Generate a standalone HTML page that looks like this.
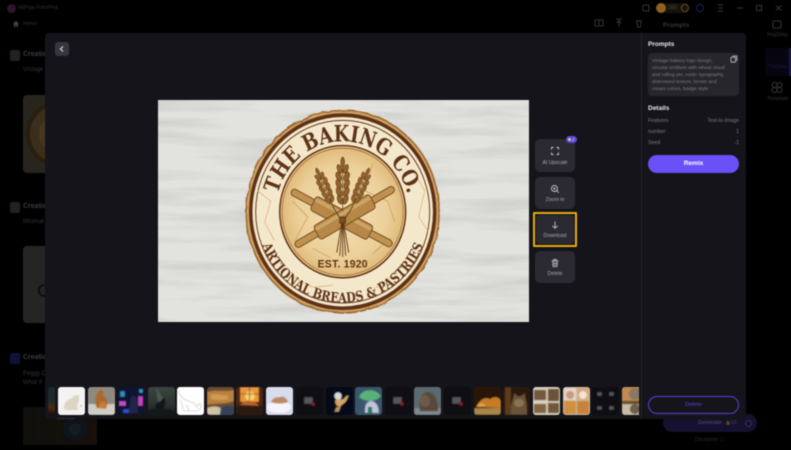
<!DOCTYPE html>
<html><head><meta charset="utf-8"><style>
html,body{margin:0;padding:0;background:#000;width:791px;height:450px;overflow:hidden;font-family:"Liberation Sans","Noto Sans CJK SC",sans-serif}
.a{position:absolute;white-space:nowrap}
.dim{color:#333338}
.btn{position:absolute;left:535px;width:40px;background:#2b2a33;border-radius:5px;color:#a9a8b0;font-size:5.2px;text-align:center}
.btn span{position:absolute;left:0;right:0;bottom:6px}
.btn svg{position:absolute;left:16px;top:8px;width:8px;height:8px;fill:none;stroke:#c4c4ca;stroke-width:.9}
.d{font-size:5.2px;color:#7c7b83;position:absolute;white-space:nowrap}
.t{position:absolute;top:387px;width:27px;height:28px;border-radius:3px;overflow:hidden}
.t svg{width:27px;height:28px;display:block;filter:blur(.6px)}
</style></head><body>
<div style="position:absolute;inset:0;filter:blur(.4px)">
<!-- dimmed background -->
<div class="a" style="left:7px;top:4px;width:9px;height:9px;border-radius:50%;background:#2e1626"></div>
<div class="a dim" style="left:18px;top:5px;font-size:5.3px">HitPaw FotorPea</div>
<svg class="a" style="left:12px;top:20px" width="8" height="8" viewBox="0 0 8 8"><path d="M4 1L.8 4H2v3h1.500V5h1v2H6V4h1.200z" fill="#44444a"/></svg>
<div class="a dim" style="left:23px;top:21px;font-size:5.3px">Home</div>
<div class="a" style="left:10px;top:50px;width:10px;height:11px;background:#20241f;border-radius:2px"></div>
<div class="a" style="left:23px;top:51px;font-size:7px;font-weight:bold;color:#3c3c42">Creation</div>
<div class="a dim" style="left:23px;top:67px;font-size:6px">Vintage</div>
<div class="a" style="left:23px;top:95px;width:30px;height:78px;background:#28251f;border-radius:4px"></div>
<svg class="a" style="left:23px;top:95px" width="22" height="78"><circle cx="36" cy="39" r="31" fill="#3a2f1c" stroke="#2a1d0c" stroke-width="4"/><circle cx="36" cy="39" r="20" fill="#463820"/></svg>
<div class="a" style="left:10px;top:202px;width:10px;height:11px;background:#20241f;border-radius:2px"></div>
<div class="a" style="left:23px;top:203px;font-size:7px;font-weight:bold;color:#3c3c42">Creation</div>
<div class="a dim" style="left:23px;top:219px;font-size:6px">Minimal</div>
<div class="a" style="left:23px;top:246px;width:30px;height:77px;background:#252525;border-radius:4px"></div>
<svg class="a" style="left:37px;top:284px" width="8" height="14"><path d="M8 1C3 1 2 4 2 7s2 5 6 5" fill="none" stroke="#080808" stroke-width="1.500"/></svg>
<div class="a" style="left:10px;top:353px;width:10px;height:11px;background:#101338;border-radius:2px"></div>
<div class="a" style="left:23px;top:354px;font-size:7px;font-weight:bold;color:#3c3c42">Creation</div>
<div class="a dim" style="left:23px;top:371px;font-size:6px">Peggy C</div>
<div class="a dim" style="left:23px;top:380px;font-size:6px">What if</div>
<div class="a" style="left:23px;top:407px;width:74px;height:38px;background:linear-gradient(90deg,#100f0c 0,#14110c 50%,#120e0b 60%,#1a100b 100%)"></div>
<svg class="a" style="left:60px;top:407px" width="37" height="38"><circle cx="15" cy="22" r="12" fill="#0e141b"/><circle cx="15" cy="22" r="6" fill="#161b22"/></svg>

<!-- top bar right -->
<svg class="a" style="left:640px;top:1px" width="151" height="14" viewBox="0 0 151 14" fill="none" stroke="#37373e">
<rect x="3" y="4" width="6" height="6" rx="1"/>
<rect x="16" y="2" width="33" height="10" rx="5" fill="#16120e" stroke="none"/>
<circle cx="21" cy="7" r="5" fill="#8e6222" stroke="none"/>
<circle cx="45" cy="7" r="3.500" stroke="#6a4e18"/>
<circle cx="60" cy="7" r="3.500" stroke="#20235c"/>
<path d="M78 4h5M78 7h5M78 10h5"/>
<path d="M97 7h6"/><rect x="116.500" y="4.500" width="5" height="5"/><path d="M136 4.500l5 5m0-5l-5 5"/>
</svg>
<div class="a" style="left:668px;top:5px;font-size:5.300px;color:#5a4c2c">160</div>
<svg class="a" style="left:590px;top:17px" width="60" height="12" fill="none" stroke="#333339"><rect x="5" y="3" width="8" height="6"/><path d="M9 3v6M26 2h6M29 10V4M26.500 6L29 3.500 31.500 6M46 4h6M47 4l.5 6h3l.5-6"/></svg>
<div class="a" style="left:663px;top:22px;font-size:6.500px;font-weight:bold;color:#36363c">Prompts</div>
<!-- right rail -->
<svg class="a" style="left:767px;top:19px" width="24" height="80" fill="none" stroke="#37373d"><rect x="6" y="2" width="8" height="7" rx="1"/><rect x="6" y="34" width="8" height="7" rx="1" stroke="#221c58"/><circle cx="7.500" cy="66" r="2.500"/><circle cx="12.500" cy="66" r="2.500"/><circle cx="7.500" cy="71" r="2.500"/><circle cx="12.500" cy="71" r="2.500"/></svg>
<div class="a" style="left:765px;top:48px;width:24px;height:28px;background:#060510"></div>
<div class="a" style="left:789px;top:48px;width:2px;height:28px;background:#1f1a55"></div>
<div class="a" style="left:767px;top:32px;font-size:5.300px;color:#333338">Img2img</div>
<div class="a" style="left:768px;top:64px;font-size:5.300px;color:#211c50">Txt2img</div>
<div class="a" style="left:767px;top:96px;font-size:5.300px;color:#333338">Template</div>
<!-- generate -->
<div class="a" style="left:663px;top:414px;width:94px;height:18px;border-radius:9px;background:#15112f"></div>
<div class="a" style="left:698px;top:420px;font-size:5.500px;font-weight:bold;color:#45425e">Generate</div>
<div class="a" style="left:726px;top:421px;width:4px;height:4px;border-radius:50%;background:#5a4415"></div>
<div class="a" style="left:731px;top:420px;font-size:5px;color:#45425e">16</div>
<div class="a" style="left:745px;top:420px;width:5px;height:5px;border-radius:50%;border:1px solid #33305c"></div>
<div class="a" style="left:695px;top:436px;font-size:5px;color:#2e2e33">Disclaimer ⓘ</div>

<!-- modal -->
<div class="a" style="left:45px;top:33px;width:701px;height:386px;background:#15141a;border-radius:4px"></div>
<div class="a" style="left:641px;top:33px;width:1px;height:386px;background:#24232a"></div>
<div class="a" style="left:55px;top:42px;width:14px;height:14px;background:#373640;border-radius:3px"></div>
<svg class="a" style="left:55px;top:42px" width="14" height="14" fill="none" stroke="#d8d8dc" stroke-width="1.200"><path d="M8 4.500L5.500 7 8 9.500"/></svg>

<!-- image -->
<svg class="a" style="left:158px;top:100px" width="371" height="222" viewBox="158 100 371 222">
<defs>
<filter id="w" x="0" y="0" width="100%" height="100%"><feTurbulence type="fractalNoise" baseFrequency=".009 .08" numOctaves="5" seed="11"/><feColorMatrix values="0 0 0 0 .58  0 0 0 0 .58  0 0 0 0 .56  1.700 0 0 0 -.72"/></filter>
<filter id="wb" x="-5%" y="-5%" width="110%" height="110%"><feTurbulence type="fractalNoise" baseFrequency=".09" numOctaves="2" seed="3"/><feDisplacementMap in="SourceGraphic" scale="3.500"/></filter>
<radialGradient id="g"><stop offset="0" stop-color="#f3dfb2"/><stop offset=".7" stop-color="#ecd09a"/><stop offset="1" stop-color="#dfb978"/></radialGradient>
<g id="h"><path d="M0 -27V22" stroke="#6a4218" stroke-width=".8"/>
<g fill="#93622a" stroke="#553213" stroke-width=".5">
<ellipse cx="0" cy="-22" rx="1.800" ry="4.500"/>
<ellipse cx="-3" cy="-16" rx="2.100" ry="4.200" transform="rotate(-22 -3 -16)"/><ellipse cx="3" cy="-16" rx="2.100" ry="4.200" transform="rotate(22 3 -16)"/>
<ellipse cx="-3.800" cy="-9" rx="2.400" ry="4.400" transform="rotate(-22 -3.800 -9)"/><ellipse cx="3.800" cy="-9" rx="2.400" ry="4.400" transform="rotate(22 3.800 -9)"/>
<ellipse cx="-3.800" cy="-2" rx="2.400" ry="4.400" transform="rotate(-22 -3.800 -2)"/><ellipse cx="3.800" cy="-2" rx="2.400" ry="4.400" transform="rotate(22 3.800 -2)"/>
<ellipse cx="-3.500" cy="5" rx="2.400" ry="4.400" transform="rotate(-22 -3.500 5)"/><ellipse cx="3.500" cy="5" rx="2.400" ry="4.400" transform="rotate(22 3.500 5)"/>
<ellipse cx="-2.700" cy="12" rx="2.200" ry="4.200" transform="rotate(-22 -2.700 12)"/><ellipse cx="2.700" cy="12" rx="2.200" ry="4.200" transform="rotate(22 2.700 12)"/>
</g></g>
<g id="p"><path d="M-53 0H53" stroke="#6b431a" stroke-width="7.500" stroke-linecap="round"/><path d="M-53 0H53" stroke="#c09250" stroke-width="5.800" stroke-linecap="round"/><rect x="-32" y="-7.500" width="64" height="15" rx="3" fill="#b78748" stroke="#6b431a" stroke-width=".8"/><rect x="-31" y="-5.500" width="62" height="3.500" fill="#cba566"/></g>
<path id="top" d="M-67 0A67 67 0 0 1 67 0"/>
<path id="bot" d="M-86.500 0A86.500 86.500 0 0 0 86.500 0"/>
</defs>
<rect x="158" y="100" width="371" height="222" fill="#e2e2df"/>
<rect x="158" y="100" width="371" height="222" filter="url(#w)"/>
<g transform="translate(342.700 211.700) scale(1 1.050)">
<circle r="96.500" fill="#cfa163" stroke="#9c6a30" stroke-width="1.500" filter="url(#wb)"/>
<circle r="92" fill="#f4e8cc" stroke="#5e3216" stroke-width="3.500"/>
<circle r="87" fill="none" stroke="#5e3216" stroke-width=".9"/>
<path d="M-85 -20L-72 -10-78 10-68 28M70 -40L82 -20 76 5 85 18M-50 62L-30 72-10 70M30 75L50 60" fill="none" stroke="#d9b77f" stroke-width=".8"/>
<circle r="63" fill="url(#g)" stroke="#5e3216" stroke-width="1.400"/>
<circle r="60.500" fill="none" stroke="#7a4a22" stroke-width=".5"/>
<path d="M-50 -10L-35 5-48 28M30 -45L22 -20 45 -10 52 10M30 40L48 25M-30 35L-12 44" fill="none" stroke="#c99c5c" stroke-width=".7"/>
<use href="#p" transform="translate(-1 6) rotate(27)" />
<use href="#p" transform="translate(2 5) rotate(-29)" />
<g stroke="#5e3a14" stroke-width=".9" fill="none"><path d="M0 5L-6 39M0 5L-3 42M0 5L0 43M0 5L3 42M0 5L6 39M-10 -5L0 10M10 -5L0 10"/></g>
<use href="#h" transform="translate(-17 -21) rotate(-25) scale(.85)"/>
<use href="#h" transform="translate(17 -21) rotate(25) scale(.85)"/>
<use href="#h" transform="translate(0 -24) scale(1.050)"/>
<rect x="-3" y="5" width="6" height="6" fill="#7a4e20" stroke="#4e2f10" stroke-width=".6"/>
<g fill="#5e3216" font-family="DejaVu Serif" font-weight="bold">
<text font-size="21.500" textLength="176" lengthAdjust="spacingAndGlyphs" text-anchor="middle"><textPath href="#top" startOffset="50%">THE BAKING CO.</textPath></text>
<text font-size="13" textLength="206" lengthAdjust="spacingAndGlyphs" text-anchor="middle"><textPath href="#bot" startOffset="50%">ARTIONAL BREADS &amp; PASTRIES</textPath></text>
<text y="53" font-size="10.500" text-anchor="middle" letter-spacing=".2" font-family="Liberation Sans">EST. 1920</text>
</g>
</g>
</svg>

<!-- side buttons -->
<div class="btn" style="top:139px;height:33px"><svg viewBox="0 0 8 8"><path d="M.5 2.500V.5h2M5.500.5h2v2M7.500 5.500v2h-2M2.500 7.500h-2v-2"/></svg><span>AI Upscale</span></div>
<div class="a" style="left:566px;top:136px;width:11px;height:7px;border-radius:4px;background:#5a46e8"></div>
<div class="a" style="left:568px;top:138px;width:3px;height:3px;border-radius:50%;background:#f3c64a"></div>
<div class="a" style="left:572px;top:137px;font-size:4.500px;color:#ddd">2</div>
<div class="btn" style="top:177px;height:32px"><svg viewBox="0 0 8 8"><circle cx="3.500" cy="3.500" r="3"/><path d="M5.800 5.800L7.800 7.800M2.300 3.500h2.400M3.500 2.300v2.400"/></svg><span>Zoom in</span></div>
<div class="a" style="left:533px;top:212px;width:40px;height:31px;border:2px solid #e6ad0d;border-radius:1px"></div>
<div class="btn" style="top:215px;height:29px;left:536px;width:38px;border-radius:3px"><svg viewBox="0 0 8 8" style="left:15px;top:6px"><path d="M4 .5V7M1.500 4.800L4 7.300 6.500 4.800"/></svg><span style="bottom:5px">Download</span></div>
<div class="btn" style="top:251px;height:32px"><svg viewBox="0 0 8 8"><path d="M.8 1.800h6.400M2.800 1.800V.6h2.400v1.200M1.600 1.800l.4 5.600h4l.4-5.600M3.300 3.300v2.800M4.700 3.300v2.800"/></svg><span>Delete</span></div>

<!-- right panel -->
<div class="a" style="left:648px;top:41px;font-size:6.500px;font-weight:bold;color:#e8e8ec">Prompts</div>
<div class="a" style="left:648px;top:53px;width:91px;height:43px;background:#27262d;border-radius:4px"></div>
<div class="a" style="left:652px;top:58px;font-size:4.950px;line-height:7px;color:#7c7b84">Vintage bakery logo design,<br>circular emblem with wheat sheaf<br>and rolling pin, rustic typography,<br>distressed texture, brown and<br>cream colors, badge style</div>
<svg class="a" style="left:730px;top:55px" width="8" height="8" fill="none" stroke="#c8c8cc" stroke-width=".8"><rect x="1" y="2.200" width="4.500" height="5" rx=".6"/><path d="M2.500 1h4.300v5"/></svg>
<div class="a" style="left:648px;top:105px;font-size:6.500px;font-weight:bold;color:#e8e8ec">Details</div>
<div class="d" style="left:648px;top:118px">Features</div><div class="d" style="right:52px;top:118px">Text-to-Image</div>
<div class="d" style="left:648px;top:129px">number</div><div class="d" style="right:52px;top:129px">1</div>
<div class="d" style="left:648px;top:140px">Seed</div><div class="d" style="right:52px;top:140px">-1</div>
<div class="a" style="left:648px;top:155px;width:91px;height:18px;border-radius:9px;background:#6a50f7;color:#fff;font-size:6.500px;font-weight:bold;text-align:center;line-height:18px">Remix</div>
<div class="a" style="left:648px;top:396px;width:89px;height:16px;border-radius:9px;border:1px solid #5a43d8;color:#5a43d8;font-size:5.800px;text-align:center;line-height:16px">Delete</div>

<!-- thumbnails -->
<div class="t" style="left:48px;width:7px;background:linear-gradient(#1a2a2e,#1e2a2a 50%,#4a2c16 72%,#14100c)"></div>
<div class="a" style="left:57px;top:418px;width:18px;height:1px;background:#33323a"></div>
<div class="t" style="left:58px;background:#f4f3f1"><svg viewBox="0 0 27 28"><path d="M6 22C6 14 12 11 15 11L16 8 18 9 21 8 21 12C21 15 20 16 19 17L20 23H9z" fill="#ddd4c4"/><circle cx="23" cy="19" r="1" fill="#bbb"/></svg></div>
<div class="t" style="left:88px;background:#8f8a80"><svg viewBox="0 0 27 28"><rect y="17" width="27" height="11" fill="#d0cdc6"/><path d="M9 21C6 14 8 4 13 3 15 3 16 6 15 9 20 11 20 17 18 21z" fill="#a9692c"/><path d="M11 21C10 16 15 13 18 16L18 22z" fill="#c87f34"/></svg></div>
<div class="t" style="left:118px;background:#10142e"><svg viewBox="0 0 27 28"><rect x="2" y="4" width="5" height="6" fill="#2c8fb5"/><rect x="1" y="14" width="7" height="5" fill="#c04cc8"/><rect x="5" y="22" width="6" height="4" fill="#3050c8"/><rect x="20" y="9" width="5" height="10" fill="#c640c0"/><rect x="21" y="2" width="4" height="4" fill="#2aa0c0"/><path d="M11 26L12 12 14 9 17 9 19 12 20 26z" fill="#1f2648"/></svg></div>
<div class="t" style="left:148px;background:linear-gradient(#3c4640,#2a3330 60%,#1a1e1a)"><svg viewBox="0 0 27 28"><path d="M8 0L16 12 10 16z" fill="#5a6a60" opacity=".6"/><path d="M7 19C9 15 13 15 14 13L15 11 17 12 17 16C17 19 15 21 14 22H9z" fill="#12151a"/><path d="M0 23C9 20 18 21 27 24V28H0z" fill="#15181a"/></svg></div>
<div class="t" style="left:177px;background:#fff"><svg viewBox="0 0 27 28" fill="none" stroke="#b8b8b8" stroke-width=".6"><path d="M1 4C3 9 7 13 12 14 16 15 19 18 20 20 21 16 23 16 24 18 25 20 22 24 20 24H7C5 22 6 17 3 12M12 24C11 20 10 19 9 18"/></svg></div>
<div class="t" style="left:207px;background:#6a4c30"><svg viewBox="0 0 27 28"><path d="M0 5C8 2 18 5 27 3V14C18 18 8 16 0 18z" fill="#b8803f"/><path d="M3 8C9 6 14 9 20 8L22 12C14 14 8 13 4 12z" fill="#d09a55"/><path d="M0 21C6 18 12 19 15 22L14 28H0z" fill="#cfc2a6"/><path d="M14 21C18 18 24 18 27 20V28H13z" fill="#34435a"/></svg></div>
<div class="t" style="left:236px;background:#4a2714"><svg viewBox="0 0 27 28"><rect x="4" y="0" width="19" height="15" fill="#e8963a"/><circle cx="14" cy="9" r="5" fill="#fbd46e"/><path d="M13.500 0v15M4 7h19" stroke="#6b3a18" stroke-width=".6"/><path d="M4 18C8 12 20 13 23 19z" fill="#b5622a"/><rect y="19" width="27" height="9" fill="#2c1a10"/></svg></div>
<div class="t" style="left:266px;background:#d8dcec"><svg viewBox="0 0 27 28"><ellipse cx="13" cy="20" rx="12" ry="6" fill="#f4f4fa"/><path d="M5 15C8 9 12 11 15 10 18 9 21 12 22 15 17 17 10 17 5 15z" fill="#b98a66"/></svg></div>
<div class="t" style="left:296px;background:#0f0e13"><svg viewBox="0 0 27 28"><rect x="8" y="10" width="9" height="7" rx="1" fill="#55555a"/><circle cx="17" cy="17" r="2" fill="#8a1c24"/></svg></div>
<div class="t" style="left:326px;background:#060a18"><svg viewBox="0 0 27 28"><circle cx="12" cy="9" r="4" fill="#d8d8d8"/><path d="M9 13C8 17 11 20 14 20L20 15 23 9 21 8 17 12z" fill="#d2a464"/><path d="M10 20L8 25H13L15 20z" fill="#b8935c"/></svg></div>
<div class="t" style="left:355px;background:#3a566c"><svg viewBox="0 0 27 28"><path d="M4 10C6 2 20 0 26 9 22 15 10 16 4 10z" fill="#57b27a"/><path d="M10 26C9 18 12 14 16 14 21 14 24 19 24 26z" fill="#c3c4dc"/><rect x="13" y="20" width="4" height="6" fill="#2f7a5a"/></svg></div>
<div class="t" style="left:385px;background:#0f0e13"><svg viewBox="0 0 27 28"><rect x="8" y="10" width="9" height="7" rx="1" fill="#55555a"/><circle cx="17" cy="17" r="2" fill="#8a1c24"/></svg></div>
<div class="t" style="left:414px;background:#5b6a70"><svg viewBox="0 0 27 28"><rect y="21" width="27" height="7" fill="#7c8a90"/><path d="M6 24C4 12 8 6 14 5 20 6 24 12 24 24z" fill="#59483a"/><ellipse cx="11" cy="14" rx="5" ry="6" fill="#6e5a48"/></svg></div>
<div class="t" style="left:444px;background:#0f0e13"><svg viewBox="0 0 27 28"><rect x="8" y="10" width="9" height="7" rx="1" fill="#55555a"/><circle cx="17" cy="17" r="2" fill="#8a1c24"/></svg></div>
<div class="t" style="left:474px;background:#2a1608"><svg viewBox="0 0 27 28"><rect y="21" width="27" height="7" fill="#a88548"/><path d="M2 20C5 12 12 9 16 12 20 8 26 10 27 14V21z" fill="#c67c26"/><path d="M2 20C5 16 9 15 12 19z" fill="#e4a850"/></svg></div>
<div class="t" style="left:503px;background:#2a190d"><svg viewBox="0 0 27 28"><rect x="2" y="0" width="6" height="28" fill="#5c3c1c"/><path d="M8 28C7 16 11 10 11 6L15 9H18L22 6C22 12 25 16 24 28z" fill="#6a5238"/><ellipse cx="16" cy="16" rx="5" ry="4" fill="#8c7352"/></svg></div>
<div class="t" style="left:533px;background:#d8d2c0"><svg viewBox="0 0 27 28"><rect x="1" y="3" width="12" height="10" fill="#75593c"/><rect x="15" y="2" width="11" height="12" fill="#6b5238"/><rect x="1" y="17" width="12" height="9" fill="#806443"/><rect x="15" y="16" width="11" height="10" fill="#71583c"/></svg></div>
<div class="t" style="left:563px;background:#c8c0b0"><svg viewBox="0 0 27 28"><rect x="1" y="1" width="12" height="12" fill="#e6d6c8"/><rect x="14" y="1" width="12" height="12" fill="#d8a878"/><rect x="1" y="14" width="12" height="13" fill="#d0903e"/><rect x="14" y="14" width="12" height="13" fill="#c9823c"/><circle cx="7" cy="8" r="4" fill="#c89a80"/><circle cx="20" cy="8" r="4" fill="#efe6d8"/></svg></div>
<div class="t" style="left:592px;background:#0f0e13"><svg viewBox="0 0 27 28" fill="#55555a"><rect x="5" y="5" width="5" height="4" rx="1"/><rect x="17" y="5" width="5" height="4" rx="1"/><rect x="5" y="19" width="5" height="4" rx="1"/><rect x="17" y="19" width="5" height="4" rx="1"/></svg></div>
<div class="t" style="left:622px;width:17px;border-radius:3px 0 0 3px;background:#c99a5c"><svg viewBox="0 0 27 28"><rect width="27" height="14" fill="#c08a50"/><circle cx="13" cy="7" r="6" fill="#8a7864"/><rect y="14" width="27" height="3" fill="#6a4a28"/><rect y="17" width="27" height="11" fill="#c6bba8"/><circle cx="13" cy="22" r="5" fill="#6e5e4c"/></svg></div>
</div>
</body></html>
